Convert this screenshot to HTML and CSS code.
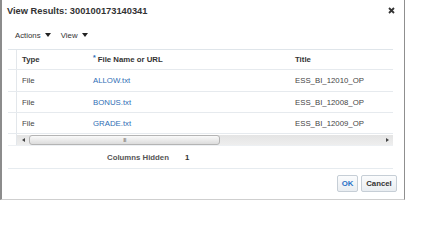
FILE: index.html
```html
<!DOCTYPE html>
<html lang="en">
<head>
    <meta charset="UTF-8">
    <title>View Results</title>
    <link rel="stylesheet" href="styles.css">
</head>
<body>

<div class="dialog">
    <div class="title-bar">
        <h1 class="title">View Results: 300100173140341</h1>
        <svg class="close" width="7" height="7" viewBox="0 0 7 7">
            <path d="M1 1 L6 6 M6 1 L1 6" stroke="#333" stroke-width="1.8"/>
        </svg>
    </div>

    <div class="toolbar">
        <span class="menu">Actions <i class="arrow"></i></span>
        <span class="menu">View <i class="arrow"></i></span>
    </div>

    <div class="grid">
        <div class="row head">
            <div class="rowhead"></div>
            <div class="cell">Type</div>
            <div class="cell"><sup class="req">*</sup> File Name or URL</div>
            <div class="cell">Title</div>
        </div>
        <div class="row">
            <div class="rowhead"></div>
            <div class="cell">File</div>
            <div class="cell"><a href="#">ALLOW.txt</a></div>
            <div class="cell">ESS_BI_12010_OP</div>
        </div>
        <div class="row">
            <div class="rowhead"></div>
            <div class="cell">File</div>
            <div class="cell"><a href="#">BONUS.txt</a></div>
            <div class="cell">ESS_BI_12008_OP</div>
        </div>
        <div class="row">
            <div class="rowhead"></div>
            <div class="cell">File</div>
            <div class="cell"><a href="#">GRADE.txt</a></div>
            <div class="cell">ESS_BI_12009_OP</div>
        </div>
        <div class="scroll-row">
            <div class="rowhead"></div>
            <div class="hscroll">
                <span class="sarrow left"></span>
                <div class="thumb"><span class="grip">III</span></div>
                <span class="sarrow right"></span>
            </div>
        </div>
    </div>

    <div class="status">
        <span class="label">Columns Hidden</span>
        <span class="value">1</span>
    </div>

    <div class="buttons">
        <button class="btn ok">OK</button>
        <button class="btn">Cancel</button>
    </div>
</div>

</body>
</html>
```

FILE: styles.css
```css
* {
    margin: 0;
    padding: 0;
    box-sizing: border-box;
}

body {
    font-family: "Liberation Sans", Arial, sans-serif;
    font-size: 7.8px;
    color: #333;
    background: #fff;
}

.dialog {
    width: 405px;
    height: 200px;
    border-left: 2px solid #8c8c8c;
    border-right: 1px solid #8f8f8f;
    border-bottom: 1px solid #cfcfcf;
    padding: 0 11px 0 6px;
}

.title-bar {
    display: flex;
    justify-content: space-between;
    align-items: flex-start;
    padding: 5px 0 0 0;
    margin-left: -1px;
    height: 17px;
}

.title {
    font-size: 9.3px;
    line-height: 12px;
    font-weight: bold;
    color: #333;
}

.close {
    margin-top: 2px;
    margin-right: -2px;
}

/* toolbar */
.toolbar {
    display: flex;
    gap: 10px;
    margin-top: 13px;
    padding-left: 7px;
    height: 12px;
    line-height: 12px;
}

.menu {
    color: #333;
}

.arrow {
    display: inline-block;
    width: 0;
    height: 0;
    margin-left: 2px;
    vertical-align: 1px;
    border-left: 3px solid transparent;
    border-right: 3px solid transparent;
    border-top: 4px solid #222;
}

/* table */
.grid {
    margin-top: 7px;
    border-top: 1px solid #dfe5ea;
}

.row {
    display: grid;
    grid-template-columns: 9px 71px 202px 1fr;
    border-bottom: 1px solid #e6eaee;
    height: 21px;
}

.row.head {
    height: 20px;
    font-weight: bold;
}

.row:nth-child(2) {
    height: 22px;
}

.rowhead {
    border-right: 1px solid #e3e7eb;
}

.cell {
    display: flex;
    align-items: center;
    padding-left: 5px;
    white-space: nowrap;
    color: #444;
}

.head .cell {
    color: #333;
}

.req {
    font-size: 7px;
    color: #2a6ab5;
    margin-right: 2px;
    align-self: flex-start;
    margin-top: 4px;
}

.cell a {
    color: #2f6eb5;
    text-decoration: none;
}

.scroll-row {
    display: grid;
    grid-template-columns: 9px 1fr;
    height: 12px;
    border-bottom: 1px solid #edf0f3;
}

.hscroll {
    position: relative;
    background: linear-gradient(#e4e4e4, #eeeeee);
    border-top: 1px solid #fff;
}

.sarrow {
    position: absolute;
    top: 3px;
    width: 0;
    height: 0;
    border-top: 2.5px solid transparent;
    border-bottom: 2.5px solid transparent;
}

.sarrow.left {
    left: 5px;
    border-right: 3px solid #444;
}

.sarrow.right {
    right: 4px;
    border-left: 3px solid #444;
}

.thumb {
    position: absolute;
    left: 12px;
    top: 0;
    width: 191px;
    height: 10px;
    border: 1px solid #b4b4b4;
    border-radius: 3px;
    background: linear-gradient(#fafafa, #dcdcdc);
    text-align: center;
}

.grip {
    display: block;
    font-size: 5px;
    line-height: 8px;
    color: #555;
    letter-spacing: -0.5px;
}

/* status */
.status {
    display: flex;
    align-items: center;
    height: 23px;
    padding-left: 99px;
    border-bottom: 1px solid #e6ebef;
    font-weight: bold;
    color: #555;
}

.status .value {
    margin-left: 16px;
    color: #333;
}

/* buttons */
.buttons {
    display: flex;
    justify-content: flex-end;
    gap: 3px;
    margin-top: 6px;
    margin-right: -4px;
}

.btn {
    font-family: inherit;
    font-size: 7.8px;
    font-weight: bold;
    color: #333;
    height: 17px;
    padding: 0 5px;
    border: 1px solid #c6ced6;
    border-radius: 2px;
    background: linear-gradient(#fbfcfd, #e9edf1);
}

.btn.ok {
    color: #2b72c6;
    width: 21px;
    padding: 0;
}

.btn:last-child {
    width: 36px;
    padding: 0;
}
```
